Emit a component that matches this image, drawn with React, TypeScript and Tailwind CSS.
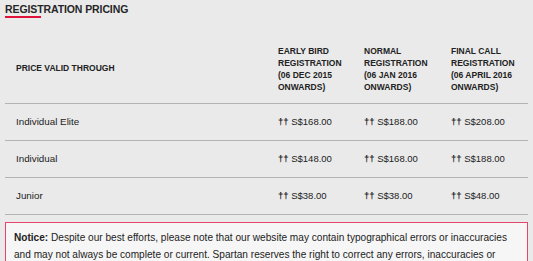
import React from 'react'

const rows = [
  { name: 'Individual Elite', prices: ['S$168.00', 'S$188.00', 'S$208.00'] },
  { name: 'Individual', prices: ['S$148.00', 'S$168.00', 'S$188.00'] },
  { name: 'Junior', prices: ['S$38.00', 'S$38.00', 'S$48.00'] },
]

const heads = [
  ['EARLY BIRD', 'REGISTRATION', '(06 DEC 2015', 'ONWARDS)'],
  ['NORMAL', 'REGISTRATION', '(06 JAN 2016', 'ONWARDS)'],
  ['FINAL CALL', 'REGISTRATION', '(06 APRIL 2016', 'ONWARDS)'],
]

export default function App() {
  return (
    <div className="w-[533px] h-[261px] overflow-hidden bg-[#eaeaea] text-[#222] pl-[5px] pr-[5px] pt-[3px] font-['Liberation_Sans',Arial,sans-serif]">
      <h2 className="text-[10.5px] font-bold leading-[12px] tracking-[-0.1px] text-[#262626]">REGISTRATION PRICING</h2>
      <div className="w-[36px] h-[2px] bg-[#e0123c] mt-[1px]" />

      {/* header */}
      <div className="grid grid-cols-[262px_86px_87px_88px] items-center mt-[16px] h-[70px] border-b border-[#b4b4b4]">
        <div className="pl-[11px] text-[8.5px] font-bold">PRICE VALID THROUGH</div>
        {heads.map((h, i) => (
          <div key={i} className="pl-[11px] text-[8.5px] font-bold leading-[12px]">
            {h.map((l) => (
              <div key={l}>{l}</div>
            ))}
          </div>
        ))}
      </div>

      {rows.map((r) => (
        <div key={r.name} className="grid grid-cols-[262px_86px_87px_88px] items-center h-[37px] border-b border-[#b4b4b4] text-[9.5px]">
          <div className="pl-[11px] text-[9.8px]">{r.name}</div>
          {r.prices.map((p, i) => (
            <div key={i} className="pl-[11px]">
              <span className="font-bold">††</span> {p}
            </div>
          ))}
        </div>
      ))}

      <div className="mt-[7px] border-[1.5px] border-[#e5456a] bg-[#f6f6f6] px-[8px] pt-[6px] text-[10.1px] leading-[17px] text-[#222]">
        <span className="font-bold">Notice:</span> Despite our best efforts, please note that our website may contain typographical errors or inaccuracies and may not always be complete or current. Spartan reserves the right to correct any errors, inaccuracies or omissions at any time, including after the registration has been submitted and confirmed.
      </div>
    </div>
  )
}
